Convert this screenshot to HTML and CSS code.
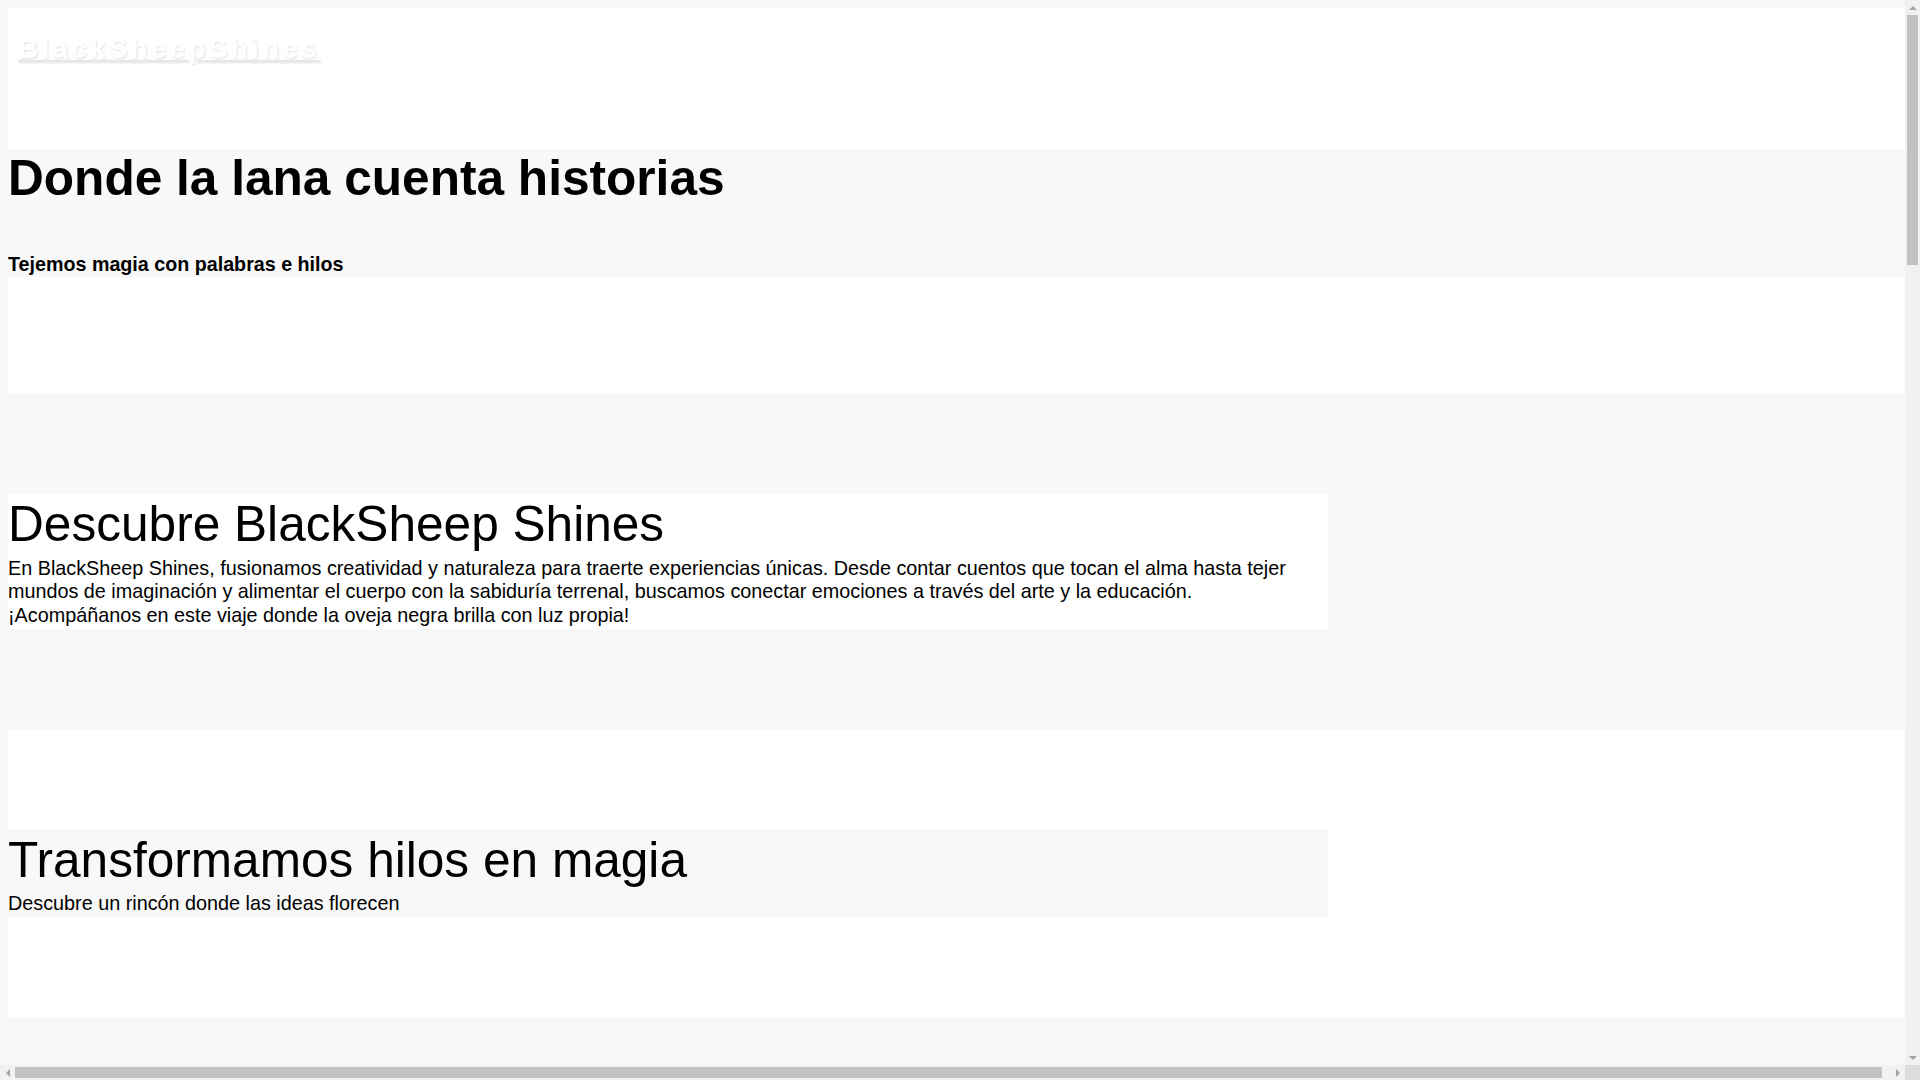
FILE: index.html
```html
<!DOCTYPE html>
<html lang="es">
<head>
<meta charset="utf-8">
<title>BlackSheepShines</title>
<link rel="stylesheet" href="styles.css">
</head>
<body>
<header class="site-header">
  <a class="brand" href="#">BlackSheepShines</a>
</header>

<section class="hero">
  <h1 class="hero-title">Donde la lana cuenta historias</h1>
  <p class="hero-tagline">Tejemos magia con palabras e hilos</p>
</section>

<section class="band band-white band-empty"></section>

<section class="intro">
  <div class="card card-white">
    <h2 class="card-title">Descubre BlackSheep Shines</h2>
    <p class="card-text">En BlackSheep Shines, fusionamos creatividad y naturaleza para traerte experiencias únicas. Desde contar cuentos que tocan el alma hasta tejer mundos de imaginación y alimentar el cuerpo con la sabiduría terrenal, buscamos conectar emociones a través del arte y la educación. ¡Acompáñanos en este viaje donde la oveja negra brilla con luz propia!</p>
  </div>
</section>

<section class="band band-white feature">
  <div class="card card-gray">
    <h2 class="card-title">Transformamos hilos en magia</h2>
    <p class="card-text">Descubre un rincón donde las ideas florecen</p>
  </div>
</section>

<div class="scrollbar scrollbar-v" aria-hidden="true">
  <span class="sb-button"><span class="sb-arrow sb-arrow-up"></span></span>
  <span class="sb-track sb-track-v"><span class="sb-thumb sb-thumb-v"></span></span>
  <span class="sb-button"><span class="sb-arrow sb-arrow-down"></span></span>
</div>
<div class="scrollbar scrollbar-h" aria-hidden="true">
  <span class="sb-button"><span class="sb-arrow sb-arrow-left"></span></span>
  <span class="sb-track sb-track-h"><span class="sb-thumb sb-thumb-h"></span></span>
  <span class="sb-button"><span class="sb-arrow sb-arrow-right"></span></span>
</div>
<div class="scrollbar-corner" aria-hidden="true"></div>
</body>
</html>
```

FILE: styles.css
```css
html {
  background: #f8f8f8;
  overflow: hidden;
}

body {
  margin: 8px;
  background: #f8f8f8;
  color: #000;
  font-family: "Liberation Sans", Arial, sans-serif;
  font-size: 16px;
}

.site-header {
  box-sizing: border-box;
  width: 100vw;
  height: 141px;
  padding: 25px 10px 0;
  background: #ffffff;
}

.brand {
  font-size: 28px;
  font-weight: bold;
  letter-spacing: 3.2px;
  color: #ffffff;
  text-decoration: underline;
  text-decoration-color: #e6e6e6;
  text-shadow: 1px 1px 2px rgba(0, 0, 0, 0.12);
}

.hero {
  padding: 0 0 1px;
}

.hero-title {
  margin: 0;
  font-size: 49.6px;
  font-weight: bold;
  line-height: 1.2;
}

.hero-tagline {
  margin: 44px 0 0;
  font-size: 19.7px;
  font-weight: bold;
  line-height: 1.2;
}

.band-white {
  width: 100vw;
  background: #ffffff;
}

.band-empty {
  height: 116px;
}

.intro {
  padding: 100.6px 0 100.4px;
}

.feature {
  box-sizing: border-box;
  padding: 100px 0;
}

.card {
  box-sizing: border-box;
  width: 1320px;
  padding: 1.5px 0 1px;
}

.card-white {
  background: #ffffff;
}

.card-gray {
  background: #f8f8f8;
}

.card-title {
  margin: 0;
  font-size: 49.6px;
  font-weight: normal;
  line-height: 1.2;
}

.card-text {
  margin: 1.8px 0 0;
  font-size: 19.8px;
  line-height: 1.2;
}

/* browser scrollbars, drawn over the page */
.scrollbar {
  position: fixed;
  display: flex;
  background: #f1f1f1;
}

.scrollbar-v {
  top: 0;
  right: 0;
  width: 15px;
  height: 1065px;
  flex-direction: column;
}

.scrollbar-h {
  left: 0;
  bottom: 0;
  width: 1905px;
  height: 15px;
  flex-direction: row;
}

.scrollbar-corner {
  position: fixed;
  right: 0;
  bottom: 0;
  width: 15px;
  height: 15px;
  background: #dcdcdc;
}

.sb-button {
  flex: 0 0 15px;
  width: 15px;
  height: 15px;
  display: flex;
  align-items: center;
  justify-content: center;
}

.sb-track {
  flex: 1 1 auto;
  display: flex;
}

.sb-track-v {
  flex-direction: column;
  padding: 0 2px;
}

.sb-track-h {
  flex-direction: row;
  padding: 2px 0;
}

.sb-thumb {
  background: #c1c1c1;
}

.sb-thumb-v {
  width: 11px;
  height: 250px;
}

.sb-thumb-h {
  height: 11px;
  flex: 1 1 auto;
  margin-right: 8px;
}

.sb-arrow {
  width: 0;
  height: 0;
  border-style: solid;
  border-color: transparent;
}

.sb-arrow-up {
  border-width: 0 4px 4px;
  border-bottom-color: #a3a3a3;
}

.sb-arrow-down {
  border-width: 4px 4px 0;
  border-top-color: #a3a3a3;
}

.sb-arrow-left {
  border-width: 4px 4px 4px 0;
  border-right-color: #a3a3a3;
}

.sb-arrow-right {
  border-width: 4px 0 4px 4px;
  border-left-color: #a3a3a3;
}
```
